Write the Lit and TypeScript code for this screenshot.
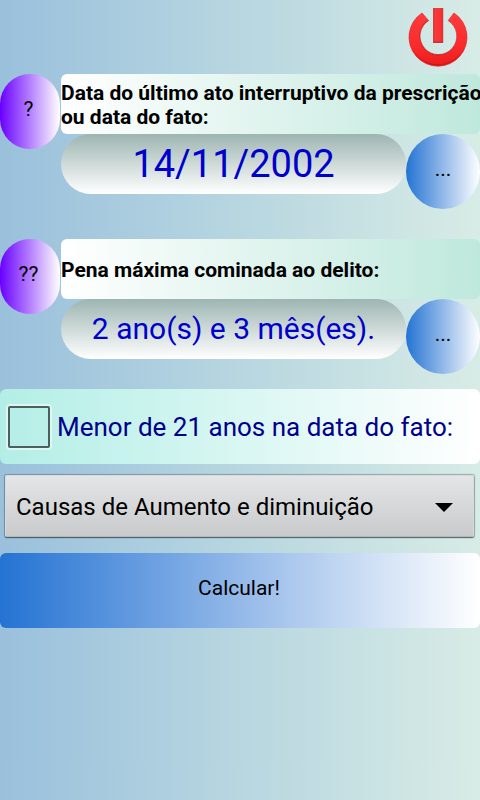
import { LitElement, html, css } from "lit";
import { customElement, state } from "lit/decorators.js";

@customElement("power-icon")
class PowerIcon extends LitElement {
  static styles = css`
    :host {
      display: block;
    }
    .icon {
      display: block;
      width: 60px;
      height: 60px;
    }
  `;

  render() {
    return html`
      <svg class="icon" viewBox="0 0 60 60" aria-hidden="true">
        <defs>
          <linearGradient id="ring" x1="0" y1="0" x2="0" y2="1">
            <stop offset="0" stop-color="#ff3c3c" />
            <stop offset="0.7" stop-color="#f8282a" />
            <stop offset="1" stop-color="#ea1c1e" />
          </linearGradient>
          <linearGradient id="bar" x1="0" y1="0" x2="1" y2="0">
            <stop offset="0" stop-color="#e02a2e" />
            <stop offset="0.2" stop-color="#f83a3c" />
            <stop offset="0.8" stop-color="#fa3032" />
            <stop offset="1" stop-color="#d82428" />
          </linearGradient>
        </defs>
        <path
          d="M14 6 A29 29 0 1 0 46 6 L40.2 13.6 A18.4 18.4 0 1 1 20.6 13.6 Z"
          fill="url(#ring)"
          stroke="#d8282c"
          stroke-width="0.7"
        />
        <path
          d="M20.6 13.6 A18.4 18.4 0 0 0 30.4 47.6 A18.4 18.4 0 0 0 46.5 38.5 A20 20 0 0 1 30 49 A20 20 0 0 1 18.6 13.6 Z"
          fill="#b8282c"
          opacity="0.6"
        />
        <path
          d="M3.5 40 A28.2 28.2 0 0 0 56.5 40 A29 29 0 0 1 3.5 40 Z"
          fill="#b80c10"
          opacity="0.5"
        />
        <rect x="25.3" y="1.3" width="9.6" height="34.2" fill="url(#bar)" stroke="#d0282c" stroke-width="0.6" />
        <path d="M25.3 35.2 H35" stroke="#c82428" stroke-width="1" />
      </svg>
    `;
  }
}

@customElement("app-root")
class AppRoot extends LitElement {
  @state() private underage = false;

  static styles = css`
    :host {
      display: block;
      min-height: 100vh;
      overflow-x: hidden;
      font-family: Roboto, "Noto Sans", sans-serif;
      color: #000;
      background: linear-gradient(90deg, #9ac0dc, #b7d6e0 50%, #d8ece6);
    }
    button {
      margin: 0;
      padding: 0;
      border: 0;
      font: inherit;
      font-size: 21px;
      line-height: 24px;
      color: #000;
      cursor: pointer;
    }
    .top {
      display: flex;
      justify-content: flex-end;
      height: 74px;
      padding: 7px 12px 0 0;
      box-sizing: border-box;
    }
    .power {
      width: 60px;
      height: 60px;
      background: none;
    }
    .form {
      display: flex;
      flex-direction: column;
    }
    .field {
      display: grid;
      grid-template-columns: 60px minmax(0, 1fr);
      column-gap: 1px;
      align-items: start;
      margin-bottom: 30px;
    }
    .field.last {
      margin-bottom: 15px;
    }
    .help {
      height: 75px;
      padding: 0 3px 6px 0;
      border-radius: 30px;
      background: linear-gradient(90deg, #6a00ff, #fff);
    }
    .caption {
      display: flex;
      align-items: center;
      height: 60px;
      padding-top: 2px;
      box-sizing: border-box;
      border-radius: 6px;
      font-size: 21px;
      line-height: 24px;
      font-weight: 700;
      white-space: nowrap;
      background: linear-gradient(90deg, #fff, #bfe8dc);
    }
    .entry {
      display: flex;
      align-items: flex-start;
    }
    .value {
      flex: 1;
      min-width: 0;
      height: 60px;
      display: flex;
      align-items: center;
      justify-content: center;
      border-radius: 30px;
      color: #0000cd;
      font-size: 30px;
      line-height: 62px;
      background: linear-gradient(180deg, #9db5b1, #fff);
    }
    .value.big {
      font-size: 38px;
    }
    .more {
      flex: none;
      width: 74px;
      height: 75px;
      padding: 0 0 6px;
      border-radius: 50%;
      background: linear-gradient(90deg, #2473d3, #fff);
    }
    .check {
      display: flex;
      align-items: center;
      gap: 7px;
      height: 75px;
      padding-left: 8px;
      border-radius: 6px;
      color: #00008b;
      font-size: 26px;
      white-space: nowrap;
      background: linear-gradient(90deg, #b3eee6, #fff);
    }
    .box {
      appearance: none;
      flex: none;
      width: 42px;
      height: 42px;
      margin: 0;
      border: 2px solid #4d5f5d;
      border-radius: 2px;
      box-shadow: 0 0 1px 2px rgba(255, 255, 255, 0.5);
    }
    .box:checked {
      background: linear-gradient(135deg, #2473d3, #9ac0dc);
    }
    .picker {
      position: relative;
      margin: 11px 6px 16px 5px;
    }
    .select {
      appearance: none;
      display: block;
      width: 100%;
      height: 62px;
      padding: 2px 48px 0 10px;
      border: 1px solid #d8dadc;
      border-bottom-color: #b4b8b8;
      border-radius: 2px;
      font: inherit;
      font-size: 24px;
      color: #000;
      background: linear-gradient(180deg, #e4e5e6, #c9cacb);
      box-shadow: 0 0 1px 1px rgba(60, 80, 90, 0.4), 0 1px 1px rgba(0, 0, 0, 0.5);
    }
    .arrow {
      position: absolute;
      right: 21px;
      top: 28px;
      width: 18px;
      height: 9px;
      pointer-events: none;
    }
    .calc {
      height: 75px;
      padding: 0 2px 6px 0;
      border-radius: 6px;
      background: linear-gradient(90deg, #2473d3, #aac7ed 60%, #fff);
    }
  `;

  private toggle(e: Event) {
    this.underage = (e.target as HTMLInputElement).checked;
  }

  render() {
    return html`
      <header class="top">
        <button class="power" aria-label="Sair"><power-icon></power-icon></button>
      </header>
      <main class="form">
        <section class="field">
          <button class="help">?</button>
          <div>
            <div class="caption">
              <span>Data do último ato interruptivo da prescrição<br />ou data do fato:</span>
            </div>
            <div class="entry">
              <div class="value big">14/11/2002</div>
              <button class="more">...</button>
            </div>
          </div>
        </section>
        <section class="field last">
          <button class="help">??</button>
          <div>
            <div class="caption">Pena máxima cominada ao delito:</div>
            <div class="entry">
              <div class="value">2 ano(s) e 3 mês(es).</div>
              <button class="more">...</button>
            </div>
          </div>
        </section>
        <label class="check">
          <input class="box" type="checkbox" .checked=${this.underage} @change=${this.toggle} />
          Menor de 21 anos na data do fato:
        </label>
        <div class="picker">
          <select class="select" aria-label="Causas de Aumento e diminuição">
            <option>Causas de Aumento e diminuição</option>
          </select>
          <svg class="arrow" viewBox="0 0 18 9" aria-hidden="true">
            <path d="M0 0 H18 L9 9 Z" fill="#000" />
          </svg>
        </div>
        <button class="calc">Calcular!</button>
      </main>
    `;
  }
}
